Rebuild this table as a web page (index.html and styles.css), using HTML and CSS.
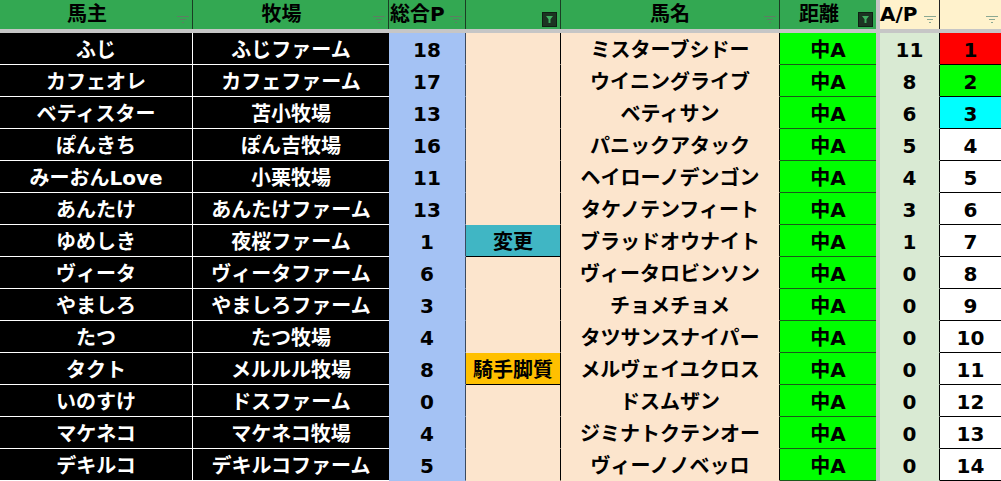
FILE: index.html
```html
<!DOCTYPE html>
<html lang="ja">
<head>
<meta charset="utf-8">
<link rel="stylesheet" href="styles.css">
</head>
<body>
<div class="sheet">
  <div class="row head">
    <div class="c h owner">馬主<span class="fi"></span></div>
    <div class="c h farm">牧場<span class="fi"></span></div>
    <div class="c h pts">総合P<span class="fi"></span></div>
    <div class="c h note"><span class="fa"></span></div>
    <div class="c h horse">馬名<span class="fi"></span></div>
    <div class="c h dist">距離<span class="fa"></span></div>
    <div class="sep"></div>
    <div class="c h ap">A/P<span class="fi light"></span></div>
    <div class="c h rank"><span class="fi light"></span></div>
  </div>
  <div class="band"></div>
  <div id="body"></div>
</div>
<script src="app.js"></script>
</body>
</html>
```

FILE: app.js
```js
const rows = [
  ["ふじ","ふじファーム",18,"","ミスターブシドー",11,1],
  ["カフェオレ","カフェファーム",17,"","ウイニングライブ",8,2],
  ["ベティスター","苫小牧場",13,"","ベティサン",6,3],
  ["ぽんきち","ぽん吉牧場",16,"","パニックアタック",5,4],
  ["みーおんLove","小栗牧場",11,"","ヘイローノデンゴン",4,5],
  ["あんたけ","あんたけファーム",13,"","タケノテンフィート",3,6],
  ["ゆめしき","夜桜ファーム",1,"変更","ブラッドオウナイト",1,7],
  ["ヴィータ","ヴィータファーム",6,"","ヴィータロビンソン",0,8],
  ["やましろ","やましろファーム",3,"","チョメチョメ",0,9],
  ["たつ","たつ牧場",4,"","タツサンスナイパー",0,10],
  ["タクト","メルルル牧場",8,"騎手脚質","メルヴェイユクロス",0,11],
  ["いのすけ","ドスファーム",0,"","ドスムザン",0,12],
  ["マケネコ","マケネコ牧場",4,"","ジミナトクテンオー",0,13],
  ["デキルコ","デキルコファーム",5,"","ヴィーノノベッロ",0,14]
];
const body = document.getElementById("body");
rows.forEach(r => {
  const row = document.createElement("div");
  row.className = "row data";
  const noteCls = r[3] === "変更" ? " change" : (r[3] ? " jockey" : "");
  const rankCls = r[6] === 1 ? " r1" : r[6] === 2 ? " r2" : r[6] === 3 ? " r3" : "";
  row.innerHTML =
    `<div class="c d owner">${r[0]}</div>` +
    `<div class="c d farm">${r[1]}</div>` +
    `<div class="c d pts">${r[2]}</div>` +
    `<div class="c d note${noteCls}">${r[3]}</div>` +
    `<div class="c d horse">${r[4]}</div>` +
    `<div class="c d dist">中A</div>` +
    `<div class="sep"></div>` +
    `<div class="c d ap">${r[5]}</div>` +
    `<div class="c d rank${rankCls}">${r[6]}</div>`;
  body.appendChild(row);
});
```

FILE: styles.css
```css
* { box-sizing: border-box; }
html, body { margin: 0; padding: 0; background: #ffffff; }
body {
  font-family: "DejaVu Sans", "Noto Sans CJK JP", sans-serif;
  font-weight: 700;
  overflow: hidden;
}
.sheet { width: 1001px; height: 481px; overflow: hidden; }
.row {
  display: grid;
  grid-template-columns: 193px 196px 77px 95px 219px 96px 4px 60px 61px;
}
.head { height: 29px; }
.data { height: 32px; }
.band { height: 4px; background: #c6c6c6; }
.sep { background: #c6c6c6; }
.c {
  position: relative;
  display: flex;
  align-items: center;
  justify-content: center;
  white-space: nowrap;
  font-size: 20px;
  color: #000;
}
.h {
  background: #33a852;
  border-right: 1px solid #1b3d24;
  padding-right: 18px;
  line-height: 29px;
}
.h.pts { justify-content: flex-start; padding-left: 1px; }
.h.horse { padding-right: 0; }
.h.ap { background: #fff2cc; justify-content: flex-start; padding-left: 0; border-right: 1px solid #222; }
.h.rank { background: #fff2cc; border-right: none; }
.h.dist { border-right: none; }

.fi {
  position: absolute;
  right: 3px;
  top: 16px;
  width: 12px;
  height: 7px;
  background:
    linear-gradient(#5c7f63, #5c7f63) 0 0 / 12px 1px no-repeat,
    linear-gradient(#5c7f63, #5c7f63) 3px 3px / 6px 1px no-repeat,
    linear-gradient(#5c7f63, #5c7f63) 5px 6px / 2px 1px no-repeat;
}
.fi.light {
  background:
    linear-gradient(#8aa892, #8aa892) 0 0 / 12px 1px no-repeat,
    linear-gradient(#8aa892, #8aa892) 3px 3px / 6px 1px no-repeat,
    linear-gradient(#8aa892, #8aa892) 5px 6px / 2px 1px no-repeat;
}
.fa {
  position: absolute;
  right: 3px;
  top: 12px;
  width: 15px;
  height: 15px;
  background: #1c3422;
  border: 1px solid #0f1f13;
}
.fa::after {
  content: "";
  position: absolute;
  left: 3px;
  top: 3px;
  width: 7px;
  height: 7px;
  background: #3fae5f;
  clip-path: polygon(0 0, 100% 0, 64% 45%, 64% 100%, 36% 100%, 36% 45%);
}

.d { line-height: 28px; padding-top: 3px; border-bottom: 1px solid #000; }
.d.owner, .d.farm { background: #000; color: #fff; border-bottom-color: #fff; }
.d.owner { border-right: 1px solid #fff; }
.d.pts { background: #a4c2f4; border-bottom-color: #a4c2f4; border-right: 1px solid #3b4a5e; }
.d.note { background: #fce5cd; border-bottom-color: #fce5cd; border-right: 1px solid #000; }
.d.note.change { background: #40b6c4; border-bottom-color: #000; }
.d.note.jockey { background: #ffc000; border-bottom-color: #000; }
.d.horse { background: #fce5cd; border-bottom-color: #fce5cd; border-right: 1px solid #000; }
.d.dist { background: #00ff00; border-bottom-color: #1a5a1a; }
.d.ap { background: #d9ead3; border-bottom-color: #d9ead3; border-right: 1px solid #000; }
.d.rank { background: #fff; }
.d.rank.r1 { background: #ff0000; }
.d.rank.r2 { background: #00ff00; }
.d.rank.r3 { background: #00ffff; }
```
